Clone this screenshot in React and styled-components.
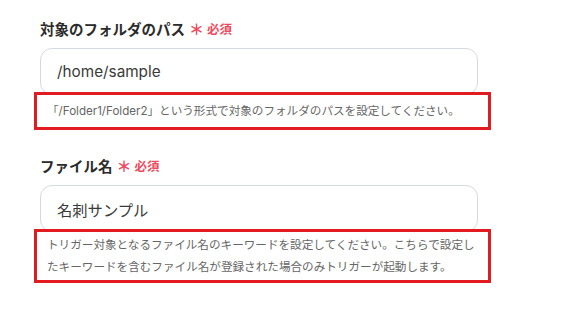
import React from "react";
import styled, { createGlobalStyle } from "styled-components";

const GlobalStyle = createGlobalStyle`
    html, body {
        margin: 0;
        padding: 0;
        background: #ffffff;
    }
    body {
        font-family: "Inter", "Noto Sans CJK JP", sans-serif;
        color: #333333;
    }
`;

const Form = styled.div`
    width: 572px;
    height: 322px;
    padding: 18px 0 0 40px;
    box-sizing: border-box;
    overflow: hidden;
`;

const Field = styled.div`
    display: flex;
    flex-direction: column;
    margin-bottom: ${(p) => p.$gap || 0}px;
`;

const Label = styled.div`
    display: flex;
    align-items: center;
    gap: 4px;
    height: 20px;
    font-size: 14.5px;
    font-weight: 700;
    color: #2b2b2b;
    margin-bottom: 10px;
`;

const Required = styled.span`
    display: inline-flex;
    align-items: center;
    gap: 3px;
    color: #ee4a5e;
    font-size: 12.5px;
    font-weight: 700;

    .star {
        font-size: 15px;
        line-height: 1;
        margin-top: 3px;
    }
`;

const Input = styled.div`
    box-sizing: border-box;
    width: 438px;
    height: 47px;
    border: 1px solid #d6d9df;
    border-radius: 12px;
    padding: 0 16px;
    display: flex;
    align-items: center;
    font-size: 15.3px;
    color: #3a3a3a;
`;

const Help = styled.div`
    box-sizing: border-box;
    width: 457px;
    margin: -3px 0 0 -6px;
    border: 3px solid #e11b1f;
    padding: ${(p) => p.$pad};
    font-size: 11.6px;
    line-height: 22px;
    color: #666666;
    white-space: nowrap;
`;

const fields = [
    {
        label: "対象のフォルダのパス",
        value: "/home/sample",
        help: ["「/Folder1/Folder2」という形式で対象のフォルダのパスを設定してください。"],
        pad: "5px 2px 5px 10px",
        gap: 25,
    },
    {
        label: "ファイル名",
        value: "名刺サンプル",
        help: [
            "トリガー対象となるファイル名のキーワードを設定してください。こちらで設定し",
            "たキーワードを含むファイル名が登録された場合のみトリガーが起動します。",
        ],
        pad: "2px 2px 2px 10px",
        gap: 0,
    },
];

const App = () => {
    return (
        <>
            <GlobalStyle />
            <Form>
                {fields.map((f, index) => (
                    <Field key={index} $gap={f.gap}>
                        <Label>
                            {f.label}
                            <Required>
                                <span className="star">＊</span>必須
                            </Required>
                        </Label>
                        <Input>{f.value}</Input>
                        <Help $pad={f.pad}>
                            {f.help.map((line, i) => (
                                <div key={i}>{line}</div>
                            ))}
                        </Help>
                    </Field>
                ))}
            </Form>
        </>
    );
};

export default App;
